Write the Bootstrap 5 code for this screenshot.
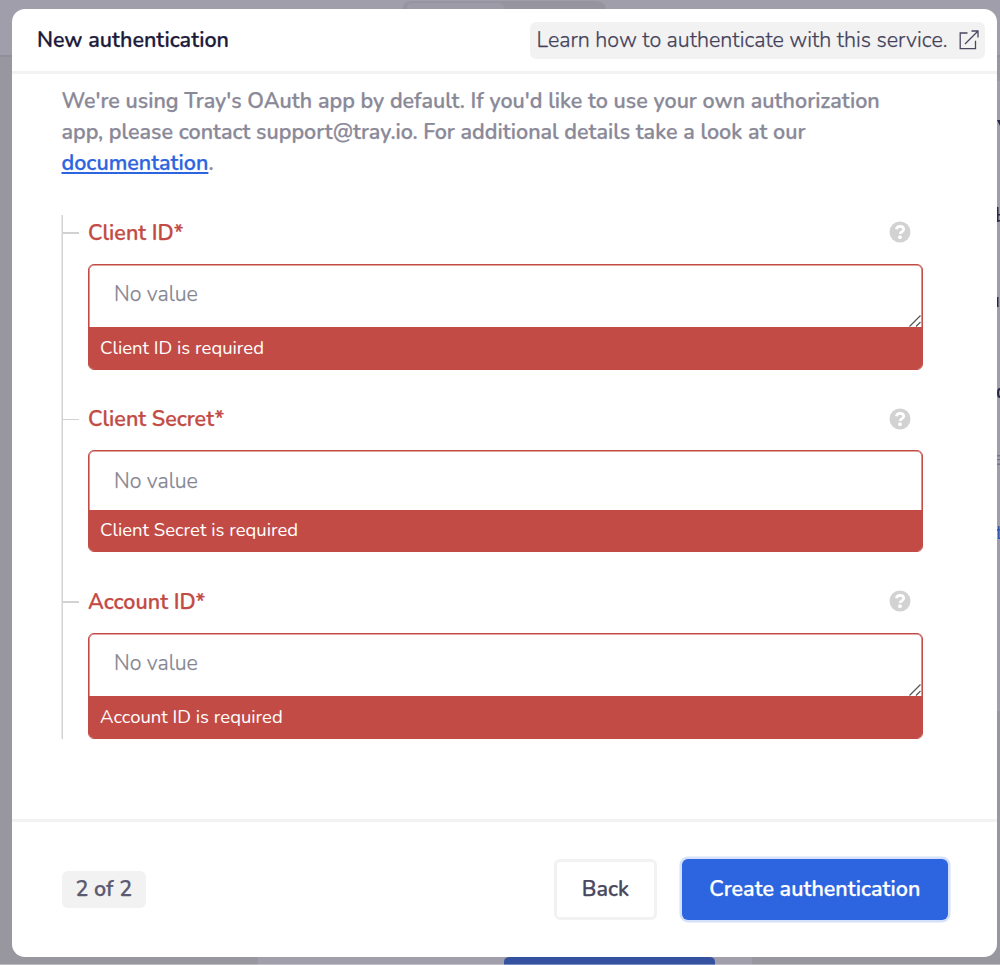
<!DOCTYPE html>
<html lang="en">
<head>
<meta charset="utf-8">
<meta name="viewport" content="width=device-width, initial-scale=1">
<title>New authentication</title>
<link href="https://cdn.jsdelivr.net/npm/bootstrap@5.3.0/dist/css/bootstrap.min.css" rel="stylesheet">
<style>
  body { font-family: "Nunito", "Lato", sans-serif; font-size: 21.5px; line-height: 31px; background: #9b9aa4; height: 965px; overflow: hidden; -webkit-text-stroke: .25px currentColor; }
  .backdrop-art { inset: 0; z-index: 0; }
  .auth-stage { padding: 9.4px 3px 8px 12px; height: 965px; z-index: 1; }
  .auth-modal { border: 0; border-radius: 13px; height: 947.6px; background: #fff; }
  .auth-head { height: 64.6px; padding: 0 12px 0 25px; border-bottom: 3px solid #f2f2f2; }
  .auth-title { font-size: 21.5px; font-weight: 600; color: #1d1a3b; line-height: 31px; }
  .learn-link { height: 37px; width: 455.5px; padding: 0 6px 0 7px; border-radius: 6px; background: #f2f2f2; color: #434159; font-weight: 320; }
  .auth-body { padding: 12px 74px 0 49.5px; height: 745px; }
  .auth-intro { color: #8a8998; font-weight: 600; }
  .auth-intro a { color: #2d64df; text-decoration-thickness: 1.5px; text-underline-offset: 2px; }
  .field-tree { border-left: 1px solid #d2d2d2; box-shadow: -.5px 0 0 #d2d2d2; height: 524px; margin-top: 36px; padding: 2px 0 0 25.5px; }
  .field-label { height: 31px; margin-right: 12px; color: #c34b45; font-weight: 600; }
  .field-label span { padding-top: 1.5px; }
  .field-label::before { content: ""; position: absolute; left: -25.5px; top: 50%; width: 16px; height: 1.5px; background: #d2d2d2; }
  .field-box { border: 1px solid #c34b45; box-shadow: inset 0 0 0 .6px #c34b45; border-radius: 6px; margin-top: 16px; background: #fff; overflow: hidden; }
  .field-value { padding: 14px 25px 0; color: #84838f; height: 62px; font-weight: 350; font-size: 21.4px; }
  .field-value.short { height: 59px; padding-top: 15px; }
  .field-error { height: 43px; background: #c34b45; color: #fff; font-size: 18.5px; line-height: 43px; padding-left: 11px; margin-bottom: -1px; -webkit-text-stroke: 0; }
  .short + .field-error { height: 42px; line-height: 41px; }
  .grip { right: 1px; bottom: 0; }
  .auth-foot { border-top: 3px solid #f2f2f2; padding: 0 49px 0 49.5px; height: 138px; }
  .step-count { height: 37px; width: 84.5px; border-radius: 6px; background: #f2f2f2; color: #5c5a70; font-weight: 600; }
  .btn-step { height: 61.5px; border-radius: 6px; font-size: 21.5px; font-weight: 600; padding: 0; }
  .btn-back { width: 103px; border: 3px solid #f2f2f2; color: #4a4860; background: #fff; }
  .btn-create { width: 266.5px; border: 0; color: #fff; background: #2d64df; box-shadow: 0 0 0 2.5px #d5e0f9; margin-left: 24.5px; }
</style>
</head>
<body class="position-relative">
<svg class="backdrop-art position-absolute" width="1000" height="965" aria-hidden="true">
  <rect width="1000" height="55" fill="#9f9eaa"/>
  <rect y="55" width="1000" height="2" fill="#908f9c"/>
  <rect y="57" width="1000" height="908" fill="#98979f"/>
  <path d="M403 12V9q0-8 9-8h183q11 0 11 10z" fill="#96959f"/>
  <path d="M407 12V8q0-5 6-5h85q6 0 6 6v3z" fill="#9c9ba7"/>
  <rect x="990" y="81" width="10" height="630" fill="#9f9eaa"/>
  <path d="M997 120l3 6v-6z M997 207h1.5v15h-1.5z M998 214h2v1.5h-2z M998 220h2v1.5h-2z M997 297h1.5v10h-1.5z M1000 388q-3 0-3 5t3 5v-2q-1 0-1-3t1-3z" fill="#2b2947"/>
  <path d="M997 455h3v1.5h-3z M997 459h3v1.3h-3z M997 463.500h3v1.500h-3z" fill="#77758a"/>
  <path d="M998 526h1.5v13h-1.5z M997 529h3v1.500h-3z M998.500 537.500h1.500v1.500h-1.500z" fill="#3256ab"/>
  <rect x="258" y="950" width="494" height="15" fill="#a09fab"/>
  <path d="M504 965v-3q0-5 6-5h199q6 0 6 5v3z" fill="#3552a0"/>
  <rect y="964" width="1000" height="1" fill="#fff" opacity=".35"/>
</svg>

<main class="auth-stage position-relative">
  <section class="auth-modal d-flex flex-column" role="dialog">
    <header class="auth-head d-flex align-items-center justify-content-between">
      <h1 class="auth-title mb-0">New authentication</h1>
      <a class="learn-link d-flex align-items-center text-decoration-none" href="#">
        <span class="text-nowrap">Learn how to authenticate with this service.</span>
        <svg class="ms-auto" width="20" height="20" viewBox="0 0 20 20" fill="none" stroke="#4a4860" stroke-width="1.3"><path d="M8.500 3H1.200v15.700h15.300v-8M6 14L18.800 1.200M12.500 1h6.500v6.500"/></svg>
      </a>
    </header>

    <div class="auth-body">
      <p class="auth-intro mb-0">We're using Tray's OAuth app by default. If you'd like to use your own authorization<br>app, please contact support@tray.io. For additional details take a look at our<br><a href="#">documentation</a>.</p>

      <div class="field-tree d-flex flex-column justify-content-between">
        <div class="field-item">
          <div class="field-label position-relative d-flex align-items-center justify-content-between"><span>Client ID*</span>
            <svg width="22" height="22" viewBox="0 0 22 22"><circle cx="11" cy="11" r="10.500" fill="#d2d2d2"/><path d="M7.300 8.300q.7-3 3.700-3 3.700 0 3.700 2.900 0 1.600-1.700 2.500-1.800.9-1.800 2.300" fill="none" stroke="#fff" stroke-width="2.700"/><circle cx="11" cy="16.200" r="1.900" fill="#fff"/></svg>
          </div>
          <div class="field-box">
            <div class="field-value position-relative">No value
              <svg class="grip position-absolute" width="12" height="12" viewBox="0 0 12 12" stroke="#555" stroke-width="1.200"><path d="M.5 11.500L11.500.5M7 11.500L11.500 7"/></svg>
            </div>
            <div class="field-error">Client ID is required</div>
          </div>
        </div>
        <div class="field-item">
          <div class="field-label position-relative d-flex align-items-center justify-content-between"><span>Client Secret*</span>
            <svg width="22" height="22" viewBox="0 0 22 22"><circle cx="11" cy="11" r="10.500" fill="#d2d2d2"/><path d="M7.300 8.300q.7-3 3.700-3 3.700 0 3.700 2.900 0 1.600-1.700 2.500-1.800.9-1.800 2.300" fill="none" stroke="#fff" stroke-width="2.700"/><circle cx="11" cy="16.200" r="1.900" fill="#fff"/></svg>
          </div>
          <div class="field-box">
            <div class="field-value short">No value</div>
            <div class="field-error">Client Secret is required</div>
          </div>
        </div>
        <div class="field-item">
          <div class="field-label position-relative d-flex align-items-center justify-content-between"><span>Account ID*</span>
            <svg width="22" height="22" viewBox="0 0 22 22"><circle cx="11" cy="11" r="10.500" fill="#d2d2d2"/><path d="M7.300 8.300q.7-3 3.700-3 3.700 0 3.700 2.900 0 1.600-1.700 2.500-1.800.9-1.800 2.300" fill="none" stroke="#fff" stroke-width="2.700"/><circle cx="11" cy="16.200" r="1.900" fill="#fff"/></svg>
          </div>
          <div class="field-box">
            <div class="field-value position-relative">No value
              <svg class="grip position-absolute" width="12" height="12" viewBox="0 0 12 12" stroke="#555" stroke-width="1.200"><path d="M.5 11.500L11.500.5M7 11.500L11.500 7"/></svg>
            </div>
            <div class="field-error">Account ID is required</div>
          </div>
        </div>
      </div>
    </div>

    <footer class="auth-foot d-flex align-items-center">
      <span class="step-count d-flex align-items-center justify-content-center me-auto">2 of 2</span>
      <button type="button" class="btn btn-step btn-back">Back</button>
      <button type="button" class="btn btn-step btn-create">Create authentication</button>
    </footer>
  </section>
</main>
<script src="https://cdn.jsdelivr.net/npm/bootstrap@5.3.0/dist/js/bootstrap.bundle.min.js"></script>
</body>
</html>
